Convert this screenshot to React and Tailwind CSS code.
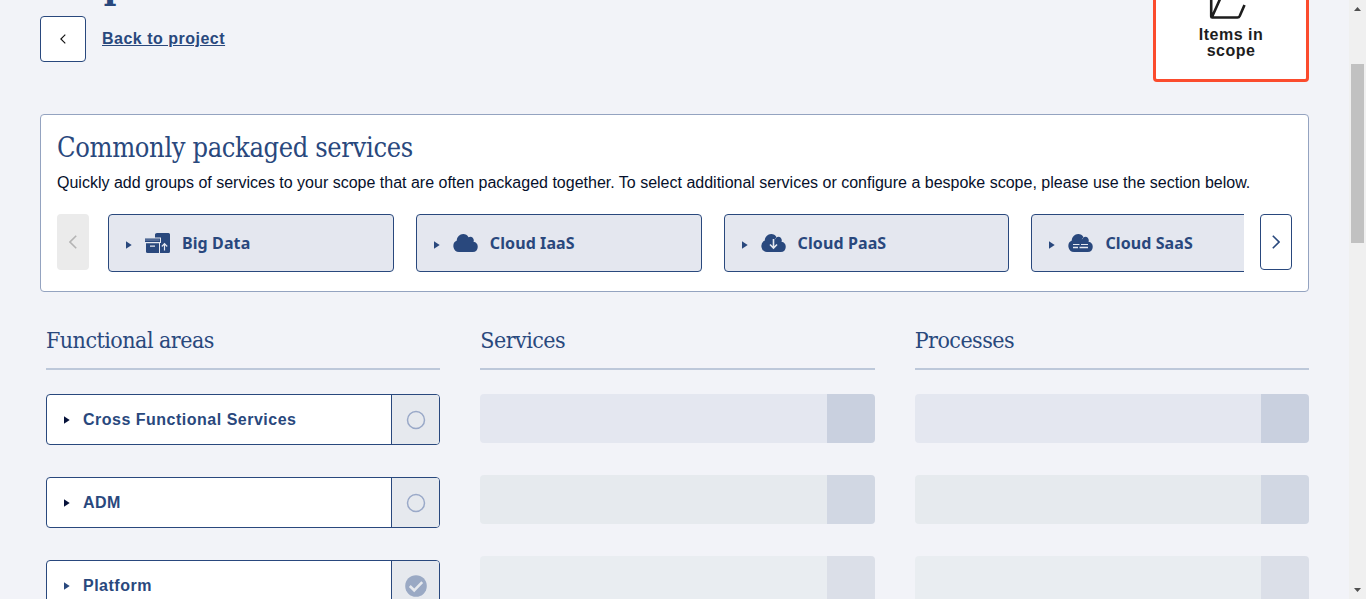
const slab = 'font-["Roboto_Slab","DejaVu_Serif_Condensed","DejaVu_Serif",serif] font-normal text-[#29487d] whitespace-nowrap';

function Chevron({ right, className }) {
  return (
    <svg viewBox="0 0 8 14" className={className} fill="none" stroke="currentColor" strokeWidth="1.6">
      <path d={right ? 'M0.8 0.8 7 7 0.8 13.2' : 'M7.2 0.8 1 7 7.2 13.2'} />
    </svg>
  );
}

function Caret({ className }) {
  return (
    <svg viewBox="0 0 6 8" className={`h-2 w-1.5 shrink-0 ${className}`} fill="currentColor">
      <path d="M0 0.300 5.700 4 0 7.700Z" />
    </svg>
  );
}

function BoxesIcon() {
  return (
    <svg viewBox="0 0 25 20" className="h-5 w-[25px] shrink-0" fill="#29487d">
      <path d="M12 0h11.500Q25 0 25 1.500V18.500Q25 20 23.500 20H15V10h1V4.500H10V1.500Q10 0 12 0Z" />
      <path d="M0 5.500h15V9H0Z" />
      <path d="M1 10.200h13v9.800H2.500Q1 20 1 18.500Z" />
      <path d="M0 7h14.500" fill="none" stroke="#8e9dba" strokeWidth="0.800" />
      <path d="M5 13.200h5M19.500 17.500v-6.500M16.800 13.500l2.700-2.800 2.700 2.800" fill="none" stroke="#e5e8f0" strokeWidth="1.200" />
    </svg>
  );
}

function CloudIcon({ kind }) {
  return (
    <svg viewBox="0 0 25 18" className="h-[18px] w-[25px] shrink-0" fill="#29487d">
      <path d="M6 18A6 6 0 0 1 3.800 6.600C3.800 3 6.700 0 10.200 0c2.300 0 4.200 1.100 5.300 3.200 2.500-1.500 5.500.4 5.300 3.300-.1.500-.2.900-.3 1.200A5.200 5.200 0 0 1 19.800 18Z" />
      {kind !== 'cloud' && (
        <path d="M15.900 3.200c-.9.500-1.500 1.200-1.800 2" fill="none" stroke="#8e9dba" strokeWidth="0.800" />
      )}
      {kind === 'download' && (
        <path d="M12.500 5v8.500M9 10.500l3.500 3.500 3.500-3.500" fill="none" stroke="#e5e8f0" strokeWidth="1.600" />
      )}
      {kind === 'server' && (
        <g fill="none" stroke="#e5e8f0">
          <path d="M5 10.500h6.500M13 10.500h7" strokeWidth="1" />
          <path d="M5 13.500h5M11.500 13.500h8.500" strokeWidth="1.400" />
        </g>
      )}
    </svg>
  );
}

const packages = [
  { name: 'Big Data', icon: <BoxesIcon /> },
  { name: 'Cloud IaaS', icon: <CloudIcon kind="cloud" /> },
  { name: 'Cloud PaaS', icon: <CloudIcon kind="download" /> },
  { name: 'Cloud SaaS', icon: <CloudIcon kind="server" /> },
];

const areas = [
  { name: 'Cross Functional Services', caret: 'text-[#06123a]' },
  { name: 'ADM', caret: 'text-[#06123a]' },
  { name: 'Platform', caret: 'text-[#29487d]', checked: true },
];

const placeholders = [
  ['bg-[#e4e7f0]', 'bg-[#c9d0df]'],
  ['bg-[#e6eaee]', 'bg-[#d1d7e3]'],
  ['bg-[#e9edf1]', 'bg-[#dbdfe8]'],
];

function Column({ title, children }) {
  return (
    <section className="min-w-0 flex-1">
      <div className="flex h-[60px] items-center border-b-2 border-[#bdc8da] pt-0.5">
        <h2 className={`${slab} text-[23px] leading-[30px] tracking-[-0.53px]`}>{title}</h2>
      </div>
      {children}
    </section>
  );
}

function Placeholders() {
  return (
    <div className="mt-6 flex flex-col gap-8">
      {placeholders.map(([left, right]) => (
        <div key={left} className="flex h-[49px] overflow-hidden rounded">
          <div className={`flex-1 ${left}`} />
          <div className={`w-12 ${right}`} />
        </div>
      ))}
    </div>
  );
}

export default function App() {
  return (
    <div className='flex h-[599px] w-[1366px] overflow-hidden bg-[#f2f3f8] font-["Liberation_Sans",Arial,sans-serif] text-base'>
      <main className="h-[599px] w-[1349px] overflow-hidden pl-10 pr-10">
        <header className="flex h-[82px] items-end justify-between">
          <div className="flex h-full flex-col">
            <h1 className='-mt-[46px] h-[62px] font-["Roboto_Slab","DejaVu_Serif_Condensed",serif] text-[38px] font-bold leading-[62px] tracking-[-1.5px] text-[#29487d]'>Scope</h1>
            <div className="flex items-center gap-4">
              <button className="flex h-[46px] w-[46px] items-center justify-center rounded border border-[#29487d] bg-white text-[#111]">
                <Chevron className="h-[10px] w-[6px]" />
              </button>
              <a className="text-base font-bold leading-5 tracking-[0.5px] text-[#29487d] underline">Back to project</a>
            </div>
          </div>
          <div className="flex h-[130px] w-[156px] flex-col items-center justify-end rounded border-[3px] border-[#fb4b2d] bg-white pb-5 text-[#1d1d1d]">
            <svg viewBox="0 0 38 38" className="mr-[6px] h-[38px] w-[38px]" fill="none" stroke="currentColor" strokeWidth="2.600" strokeLinejoin="round">
              <path d="M2.200 1v34.500Q2.200 36.500 3.200 36.500H28.500Q30 36.500 30.700 35L35.500 24M3 36 11.500 17H37" />
            </svg>
            <div className="mt-2 text-center text-base font-bold leading-4 tracking-[0.5px]">Items in<br />scope</div>
          </div>
        </header>

        <section className="mt-8 h-[178px] rounded border border-[#94a3c0] bg-white px-4 pt-4">
          <h2 className={`${slab} text-[27px] leading-[34px] tracking-[-0.36px]`}>Commonly packaged services</h2>
          <p className="mt-2 whitespace-nowrap text-base leading-5 text-[#06102b]">
            Quickly add groups of services to your scope that are often packaged together. To select additional services or configure a bespoke scope, please use the section below.
          </p>
          <div className="mt-[21px] flex items-start">
            <button className="flex h-14 w-8 shrink-0 items-center justify-center rounded bg-[#ebebeb] text-[#b4b4b4]">
              <Chevron className="h-[14px] w-2" />
            </button>
            <div className="ml-[19px] flex w-[1136px] gap-[22px] overflow-hidden">
              {packages.map((item) => (
                <div key={item.name} className="flex h-[58px] w-[285.800px] shrink-0 items-center rounded border border-[#29487d] bg-[#e4e7ef] pl-[17px] text-[#29487d]">
                  <Caret className="mt-[3px]" />
                  <div className="ml-[13px] flex">{item.icon}</div>
                  <span className='ml-3 font-["Noto_Sans",sans-serif] text-base font-bold leading-6 tracking-[0.1px]'>{item.name}</span>
                </div>
              ))}
            </div>
            <button className="ml-4 flex h-14 w-8 shrink-0 items-center justify-center rounded border border-[#29487d] bg-white text-[#29487d]">
              <Chevron right className="h-[14px] w-2" />
            </button>
          </div>
        </section>

        <div className="ml-[6px] mt-[18px] flex gap-10">
          <Column title="Functional areas">
            <div className="mt-6 flex flex-col gap-8">
              {areas.map((area) => (
                <div key={area.name} className="flex h-[51px] overflow-hidden rounded border border-[#29487d] bg-white">
                  <div className="flex flex-1 items-center pl-[17px]">
                    <Caret className={`mt-[1px] ${area.caret}`} />
                    <span className="ml-[13px] text-base font-bold leading-5 tracking-[0.5px] text-[#29487d]">{area.name}</span>
                  </div>
                  <div className="flex w-[48px] items-center justify-center border-l border-[#29487d] bg-[#e6e9ee]">
                    {area.checked ? (
                      <svg viewBox="0 0 22 22" className="h-[22px] w-[22px]">
                        <circle cx="11" cy="11" r="10.800" fill="#9aa9c4" />
                        <path d="M4.800 11 9.200 15.300 17.200 7.200" fill="none" stroke="#e6e9ee" strokeWidth="2.600" />
                      </svg>
                    ) : (
                      <svg viewBox="0 0 20 20" className="h-5 w-5">
                        <circle cx="10" cy="10" r="8.500" fill="none" stroke="#9aa9c8" strokeWidth="1.500" />
                      </svg>
                    )}
                  </div>
                </div>
              ))}
            </div>
          </Column>
          <Column title="Services"><Placeholders /></Column>
          <Column title="Processes"><Placeholders /></Column>
        </div>
      </main>

      <aside className="flex w-[17px] flex-col items-center bg-[#f0f0f0]">
        <svg viewBox="0 0 7 4" className="mt-[7px] h-1 w-[7px]" fill="#505050"><path d="M3.500 0 7 4H0Z" /></svg>
        <div className="mt-[53px] h-[179px] w-[13px] bg-[#c1c1c1]" />
        <svg viewBox="0 0 7 4" className="mb-[7px] mt-auto h-1 w-[7px]" fill="#505050"><path d="M0 0H7L3.500 4Z" /></svg>
      </aside>
    </div>
  );
}
